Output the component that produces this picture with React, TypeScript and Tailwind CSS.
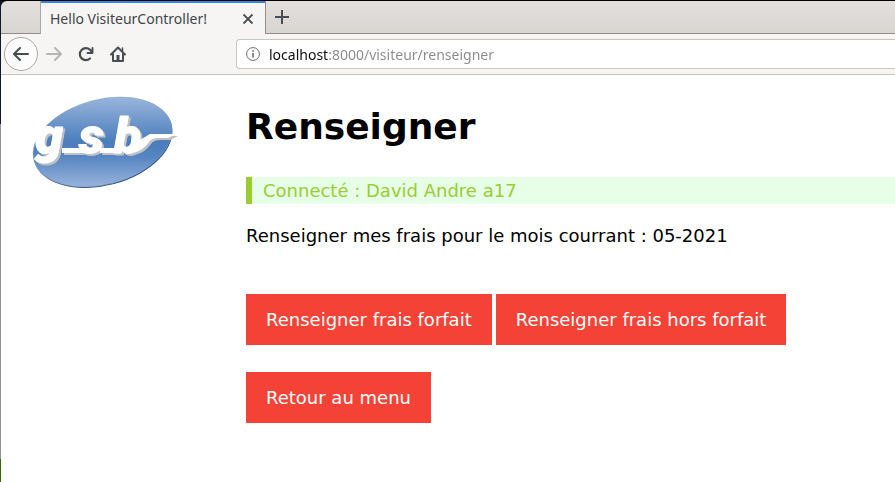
import React from "react";

function TabBar() {
  return (
    <div className="flex h-[33px] overflow-hidden rounded-tl-md bg-linear-to-b from-[#e3dfdd] to-[#d8d5d1]">
      <div className="w-10 shrink-0 border-r border-b border-[#aaa6a3] border-b-[#918e8b]" />
      <div className="flex w-56 shrink-0 items-center justify-between border-t-2 border-[#3584e4] bg-[#f6f5f4] pr-2 pl-[9px]">
        <span className="font-['Noto_Sans',sans-serif] text-sm whitespace-nowrap text-[#3f4548]">Hello VisiteurController!</span>
        <button type="button" aria-label="Fermer l'onglet" className="h-4 w-[18px]">
          <svg viewBox="0 0 18 16" className="h-4 w-[18px]" fill="none" stroke="#4b5154" strokeWidth="1.8">
            <path d="M4.5 3.5l9 9M13.5 3.5l-9 9" />
          </svg>
        </button>
      </div>
      <div className="flex grow items-center border-b border-l border-[#918e8b] pl-2">
        <button type="button" aria-label="Nouvel onglet" className="h-4 w-4">
          <svg viewBox="0 0 16 16" className="h-4 w-4" fill="none" stroke="#474d50" strokeWidth="2">
            <path d="M8 1v14M1 8h14" />
          </svg>
        </button>
      </div>
    </div>
  );
}

function Toolbar() {
  return (
    <div className="flex h-[41px] items-center border-b border-[#c9c6c2] bg-[#f6f5f4] pl-[3px]">
      <button type="button" aria-label="Précédent" className="flex h-[34px] w-[34px] shrink-0 items-center justify-center rounded-full border border-[#aaa8a6] bg-[#fcfcfc]">
        <svg viewBox="0 0 16 16" className="h-4 w-4" fill="none" stroke="#474d50" strokeWidth="2" strokeLinecap="round" strokeLinejoin="round">
          <path d="M15 8H1.500M7 2L1 8l6 6" />
        </svg>
      </button>
      <button type="button" aria-label="Suivant" className="flex h-8 w-8 shrink-0 items-center justify-center">
        <svg viewBox="0 0 16 16" className="h-4 w-4" fill="none" stroke="#b5b5b4" strokeWidth="2" strokeLinecap="round" strokeLinejoin="round">
          <path d="M1 8h13.500M9 2l6 6-6 6" />
        </svg>
      </button>
      <button type="button" aria-label="Actualiser" className="flex h-8 w-8 shrink-0 items-center justify-center">
        <svg viewBox="0 0 16 16" className="h-4 w-4" fill="none" stroke="#474d50" strokeWidth="2.200" strokeLinecap="round" strokeLinejoin="round">
          <path d="M12 12.500A6 6 0 1 1 12 3.800L14 6" />
          <path d="M14.500 2v5H9.500" strokeWidth="1.900" />
        </svg>
      </button>
      <button type="button" aria-label="Accueil" className="flex h-8 w-8 shrink-0 items-center justify-center">
        <svg viewBox="0 0 16 16" className="h-4 w-4" fill="none" stroke="#474d50" strokeWidth="2" strokeLinejoin="round" strokeLinecap="round">
          <path d="M1 8.500L8 1.500l7 7M3 8v7h10V8" />
          <path d="M6.500 15V9h3v6z" fill="#474d50" stroke="none" />
          <path d="M12.500 2v3" strokeWidth="1.500" />
        </svg>
      </button>
      <label className="ml-[102px] flex h-[30px] grow items-center rounded-l border border-r-0 border-[#c9c4bf] bg-white pl-[9px]">
        <svg viewBox="0 0 14 14" className="h-3.5 w-3.5 shrink-0" fill="none" stroke="#6c6c6c" aria-hidden="true">
          <circle cx="7" cy="7" r="6.400" />
          <path d="M7 6v4.500M7 3.200v1.600" strokeWidth="1.600" />
        </svg>
        <input
          type="text"
          aria-label="Adresse"
          defaultValue="localhost:8000/visiteur/renseigner"
          className="ml-[9px] h-7 min-w-0 grow bg-[linear-gradient(to_right,#0c0c0d_59px,#8a8a8a_59px)] bg-clip-text font-['Noto_Sans',sans-serif] text-sm text-transparent outline-none"
        />
      </label>
    </div>
  );
}

function Logo() {
  return (
    <svg viewBox="0 0 150 96" className="h-24 w-[150px]" role="img" aria-label="gsb">
      <defs>
        <linearGradient id="oval" gradientUnits="userSpaceOnUse" x1="84" y1="3" x2="60" y2="91">
          <stop offset="0" stopColor="#9ab6dc" />
          <stop offset="0.5" stopColor="#4a7dbc" />
          <stop offset="0.65" stopColor="#5585c2" />
          <stop offset="1" stopColor="#9ab4dc" />
        </linearGradient>
        <filter id="relief" x="-10%" y="-10%" width="120%" height="130%">
          <feDropShadow dx="2" dy="2" stdDeviation="0.3" floodColor="#bfc1c4" floodOpacity="1" />
        </filter>
      </defs>
      <ellipse cx="73" cy="48" rx="71" ry="42.500" transform="rotate(-15 73 48)" fill="#294b78" />
      <ellipse cx="72.500" cy="47" rx="71" ry="42.500" transform="rotate(-15 72.500 47)" fill="url(#oval)" stroke="#7f9fc5" strokeWidth="0.500" />
      <g fill="#fff" stroke="#fff" strokeLinejoin="round" filter="url(#relief)">
        <text x="5 49 84" y="58" fontFamily="Roboto, sans-serif" fontWeight="900" fontStyle="italic" fontSize="50" strokeWidth="1">gsb</text>
        <path d="M32 55.500H54M70 55.500H88" fill="none" strokeWidth="5" />
        <path d="M98 58C110 58 114 53 119 47C121 44 124 43 128 43H138L146 39H120L110 45z" stroke="none" />
      </g>
    </svg>
  );
}

function ActionLink({ children }: { children: React.ReactNode }) {
  return (
    <a href="#" className="inline-block bg-[#f44336] px-5 py-3 text-white">
      {children}
    </a>
  );
}

export default function App() {
  return (
    <div className="flex min-h-screen border-t border-black bg-white">
      <div className="w-px shrink-0 bg-[linear-gradient(#10182b_123px,#949494_123px,#949494_458px,#376b08_458px)]" />
      <div className="min-w-0 grow">
        <header className="bg-[#10182b]">
          <TabBar />
          <Toolbar />
        </header>
        <div className="flex font-['DejaVu_Sans',sans-serif] text-lg leading-[27px] text-black">
          <aside className="w-[245px] shrink-0 pt-5 pl-[29px]">
            <Logo />
          </aside>
          <main className="min-w-0 grow pt-[25px]">
            <h1 className="mb-[23px] text-4xl leading-[54px] font-bold">Renseigner</h1>
            <p className="mb-[18px] border-l-6 border-[#9acd32] bg-[#e6ffe6] pl-[11px] text-[#9acd32]">Connecté : David Andre a17</p>
            <p className="mb-[45px]">Renseigner mes frais pour le mois courrant : 05-2021</p>
            <div className="mb-[27px] flex flex-wrap gap-1">
              <ActionLink>Renseigner frais forfait</ActionLink>
              <ActionLink>Renseigner frais hors forfait</ActionLink>
            </div>
            <ActionLink>Retour au menu</ActionLink>
          </main>
        </div>
      </div>
    </div>
  );
}
